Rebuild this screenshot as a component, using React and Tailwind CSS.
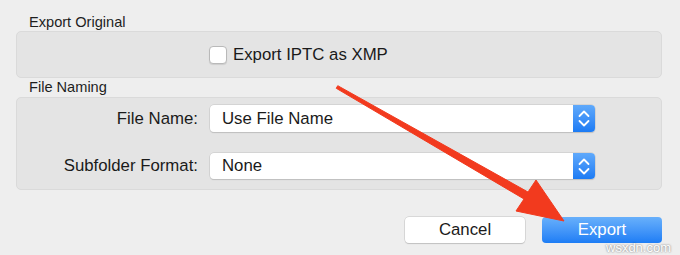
const FONT = { fontFamily: '"Liberation Sans", Arial, sans-serif' };

function Stepper() {
  return (
    <div className="w-[22px] h-full rounded-r-[4px] bg-gradient-to-b from-[#5fa9fb] to-[#1b7bf4] flex items-center justify-center">
      <svg width="12" height="19" viewBox="0 0 12 19" fill="none" stroke="white" strokeWidth="1.8" strokeLinecap="round" strokeLinejoin="round">
        <polyline points="1.5,7 6,2.5 10.5,7" />
        <polyline points="1.5,12 6,16.5 10.5,12" />
      </svg>
    </div>
  );
}

function SelectRow({ label, value, tall }) {
  return (
    <div className="flex items-center">
      <div className="w-[193px] text-right pr-[12px] text-[16.8px] text-[#1a1a1a]">
        {label}
      </div>
      <div
        className={
          "w-[385px] flex items-stretch bg-white rounded-[4px] shadow-[0_0_0_0.5px_#c4c4c4,0_1px_1px_rgba(0,0,0,0.18)] " +
          (tall ? "h-[27px]" : "h-[26px]")
        }
      >
        <div className="flex-1 pl-[12px] flex items-center text-[16.8px] text-[#1a1a1a]">
          {value}
        </div>
        <Stepper />
      </div>
    </div>
  );
}

export default function App() {
  return (
    <div
      className="relative w-[680px] h-[255px] bg-[#eeeeee] overflow-hidden pt-[13px]"
      style={FONT}
    >
      <div className="pl-[29px] h-[18px] leading-[18px] text-[14.6px] text-[#1e1e1e]">
        Export Original
      </div>
      <div className="ml-[16px] w-[646px] h-[47px] rounded-[5px] bg-[#e4e4e4] border border-[#dadada] flex items-center pl-[192px]">
        <div className="w-[18px] h-[18px] rounded-[4px] bg-white border border-[#b9b9b9] shadow-[0_1px_1px_rgba(0,0,0,0.1)]" />
        <span className="ml-[6px] text-[16.8px] text-[#1a1a1a]">Export IPTC as XMP</span>
      </div>
      <div className="pl-[29px] h-[19px] leading-[19px] text-[14.6px] text-[#1e1e1e]">
        File Naming
      </div>
      <div className="ml-[16px] w-[646px] h-[93px] rounded-[5px] bg-[#e4e4e4] border border-[#dadada] pt-[7px] flex flex-col gap-[21px]">
        <SelectRow label="File Name:" value="Use File Name" tall />
        <SelectRow label="Subfolder Format:" value="None" />
      </div>
      <div className="flex justify-end gap-[17px] pr-[18px] mt-[27px]">
        <button className="w-[120px] h-[26px] rounded-[4px] bg-white shadow-[0_0_0_0.5px_#c2c2c2,0_1px_1px_rgba(0,0,0,0.18)] text-[16.8px] text-[#1a1a1a]">
          Cancel
        </button>
        <button className="w-[120px] h-[26px] rounded-[4px] bg-gradient-to-b from-[#68b0fb] to-[#1c7df5] text-[16.8px] text-white">
          Export
        </button>
      </div>

      <svg
        className="absolute left-0 top-0 pointer-events-none"
        width="680"
        height="255"
        viewBox="0 0 680 255"
      >
        <polygon
          points="337.75,85.7 528,192 536,180 564,221 516,211 524,199 336.25,88.3"
          fill="#f23a1e"
          stroke="#f23a1e"
          strokeWidth="1"
          strokeLinejoin="round"
        />
      </svg>

      <div className="absolute left-[606px] top-[238px] text-[13px] text-white [text-shadow:0_0_2px_rgba(0,0,0,0.6)]">
        wsxdn.com
      </div>
    </div>
  );
}
